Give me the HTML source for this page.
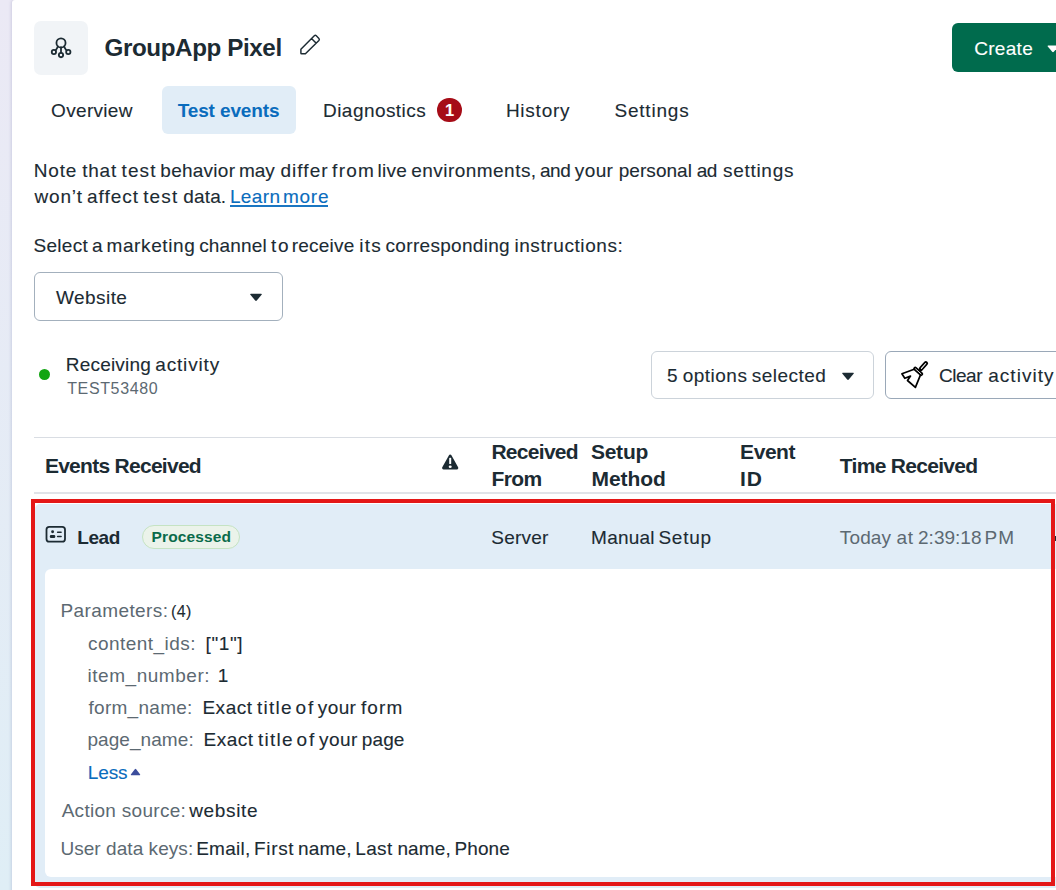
<!DOCTYPE html>
<html lang="en">
<head>
<meta charset="utf-8">
<title>GroupApp Pixel - Test events</title>
<style>
html,body{margin:0;padding:0;}
body{width:1056px;height:890px;overflow:hidden;position:relative;background:linear-gradient(180deg,#ebe9f5 0%,#dfeef6 100%);font-family:"Liberation Sans",Arial,Helvetica,sans-serif;}
.card{position:absolute;left:12px;top:0;width:1060px;height:900px;background:#fff;border-top-left-radius:3px;box-shadow:-1px 0 3px rgba(70,70,130,.17);}
.t{position:absolute;white-space:pre;line-height:1;-webkit-text-stroke:0.12px currentColor;}
.abs{position:absolute;}
svg{position:absolute;overflow:visible;}
</style>
</head>
<body>
<div class="card"></div>

<div class="abs" style="left:34px;top:20.7px;width:54px;height:54px;border-radius:7px;background:#f1f4f7"></div>
<svg style="left:0;top:0" width="1056" height="890" viewBox="0 0 1056 890" fill="none" stroke="#1c2b33" stroke-linecap="round" stroke-linejoin="round">
<g stroke-width="1.8">
<circle cx="61" cy="42.9" r="4.55"/>
<circle cx="53.9" cy="52" r="2.15"/>
<circle cx="61" cy="55.1" r="2.15"/>
<circle cx="68.3" cy="52" r="2.15"/>
<path d="M61 47.4V52.8M57.9 46.3C57.3 48 56.6 49.3 55.6 50.3M64.1 46.3C64.7 48 65.4 49.3 66.5 50.3"/>
</g>
<path stroke-width="1.45" transform="translate(-0.1,-0.5)" d="M301 53.7V49.8L314.4 36.3Q315.4 35.4 316.4 36.3L319 38.9Q319.9 39.9 319 40.9L305.5 54.3L301.6 54.3Q301 54.3 301 53.7ZM311.6 39.1L316.1 43.6"/>
</svg>
<span class="t" style="left:104.55px;top:36.2px;font-size:24.2px;font-weight:700;letter-spacing:-0.4px;color:#1c2b33;-webkit-text-stroke:0;">GroupApp Pixel</span>
<div class="abs" style="left:952px;top:23px;width:120px;height:49px;border-radius:6px;background:#006b4d"></div>
<span class="t" style="left:974.18px;top:38.75px;font-size:19px;font-weight:400;letter-spacing:0.317px;color:#ffffff;">Create</span>
<svg style="left:1046px;top:44px" width="14" height="10" viewBox="0 0 14 10"><path d="M2.2 1.6H11.8Q13 1.6 12.2 2.6L7.8 7.8Q7 8.7 6.2 7.8L1.8 2.6Q1 1.6 2.2 1.6Z" fill="#fff"/></svg>
<div class="abs" style="left:162px;top:86px;width:133.5px;height:48px;border-radius:6px;background:#e1edf7"></div>
<span class="t" style="left:51.1px;top:101.2px;font-size:19px;font-weight:400;letter-spacing:0.313px;color:#1c2b33;">Overview</span>
<span class="t" style="left:177.66px;top:101px;font-size:19px;font-weight:700;letter-spacing:-0.124px;color:#0a6cbd;-webkit-text-stroke:0;">Test events</span>
<span class="t" style="left:323.05px;top:101.2px;font-size:19px;font-weight:400;letter-spacing:0.44px;color:#1c2b33;">Diagnostics</span>
<span class="t" style="left:505.9px;top:101.2px;font-size:19px;font-weight:400;letter-spacing:0.759px;color:#1c2b33;">History</span>
<span class="t" style="left:614.46px;top:101.2px;font-size:19px;font-weight:400;letter-spacing:0.791px;color:#1c2b33;">Settings</span>
<div class="abs" style="left:437.4px;top:97.5px;width:24.5px;height:24.5px;border-radius:50%;background:#a60c17"></div>
<span class="t" style="left:445px;top:101.6px;font-size:16.5px;font-weight:700;color:#fff">1</span>
<div class="ln"><span class="t" style="left:33.75px;top:160.8px;font-size:19px;font-weight:400;letter-spacing:0.81px;color:#1c2b33;">Note</span> <span class="t" style="left:82.15px;top:160.8px;font-size:19px;font-weight:400;letter-spacing:0.784px;color:#1c2b33;">that</span> <span class="t" style="left:121.53px;top:160.8px;font-size:19px;font-weight:400;letter-spacing:1.115px;color:#1c2b33;">test</span> <span class="t" style="left:160.33px;top:160.8px;font-size:19px;font-weight:400;letter-spacing:0.252px;color:#1c2b33;">behavior</span> <span class="t" style="left:238.99px;top:160.8px;font-size:19px;font-weight:400;letter-spacing:-0.002px;color:#1c2b33;">may</span> <span class="t" style="left:280.47px;top:160.8px;font-size:19px;font-weight:400;letter-spacing:1.054px;color:#1c2b33;">differ</span> <span class="t" style="left:332.09px;top:160.8px;font-size:19px;font-weight:400;letter-spacing:1.28px;color:#1c2b33;">from</span> <span class="t" style="left:377.44px;top:160.8px;font-size:19px;font-weight:400;letter-spacing:0.29px;color:#1c2b33;">live</span> <span class="t" style="left:411.3px;top:160.8px;font-size:19px;font-weight:400;letter-spacing:0.457px;color:#1c2b33;">environments,</span> <span class="t" style="left:539.91px;top:160.8px;font-size:19px;font-weight:400;letter-spacing:-0.45px;color:#1c2b33;">and</span> <span class="t" style="left:574.8px;top:160.8px;font-size:19px;font-weight:400;letter-spacing:0.393px;color:#1c2b33;">your</span> <span class="t" style="left:618.77px;top:160.8px;font-size:19px;font-weight:400;letter-spacing:0.039px;color:#1c2b33;">personal</span> <span class="t" style="left:696.72px;top:160.8px;font-size:19px;font-weight:400;letter-spacing:-0.45px;color:#1c2b33;">ad</span> <span class="t" style="left:722.94px;top:160.8px;font-size:19px;font-weight:400;letter-spacing:0.717px;color:#1c2b33;">settings</span></div>
<div class="ln"><span class="t" style="left:34.51px;top:187.2px;font-size:19px;font-weight:400;letter-spacing:0.796px;color:#1c2b33;">won’t</span> <span class="t" style="left:86.97px;top:187.2px;font-size:19px;font-weight:400;letter-spacing:0.999px;color:#1c2b33;">affect</span> <span class="t" style="left:143.15px;top:187.2px;font-size:19px;font-weight:400;letter-spacing:1.144px;color:#1c2b33;">test</span> <span class="t" style="left:183.31px;top:187.2px;font-size:19px;font-weight:400;letter-spacing:0.148px;color:#1c2b33;">data.</span></div>
<div class="ln"><span class="t" style="left:229.9px;top:187.2px;font-size:19px;font-weight:400;letter-spacing:0.385px;color:#0a6cbd;">Learn</span> <span class="t" style="left:282.95px;top:187.2px;font-size:19px;font-weight:400;letter-spacing:0.758px;color:#0a6cbd;">more</span></div>
<div class="abs" style="left:230px;top:205.45px;width:98.4px;height:1.1px;background:#1a76c2"></div>
<div class="ln"><span class="t" style="left:33.53px;top:236px;font-size:19px;font-weight:400;letter-spacing:0.285px;color:#1c2b33;">Select</span> <span class="t" style="left:92.11px;top:236px;font-size:19px;font-weight:400;letter-spacing:0.0px;color:#1c2b33;">a</span> <span class="t" style="left:106.46px;top:236px;font-size:19px;font-weight:400;letter-spacing:0.622px;color:#1c2b33;">marketing</span> <span class="t" style="left:199.14px;top:236px;font-size:19px;font-weight:400;letter-spacing:0.178px;color:#1c2b33;">channel</span> <span class="t" style="left:270.92px;top:236px;font-size:19px;font-weight:400;letter-spacing:1.9px;color:#1c2b33;">to</span> <span class="t" style="left:291.75px;top:236px;font-size:19px;font-weight:400;letter-spacing:0.206px;color:#1c2b33;">receive</span> <span class="t" style="left:359.33px;top:236px;font-size:19px;font-weight:400;letter-spacing:1.149px;color:#1c2b33;">its</span> <span class="t" style="left:385.57px;top:236px;font-size:19px;font-weight:400;letter-spacing:0.308px;color:#1c2b33;">corresponding</span> <span class="t" style="left:514.41px;top:236px;font-size:19px;font-weight:400;letter-spacing:0.588px;color:#1c2b33;">instructions:</span></div>
<div class="abs" style="left:34px;top:272px;width:247px;height:47px;border:1px solid #a3b0bd;border-radius:6px;background:#fff"></div>
<span class="t" style="left:55.94px;top:287.75px;font-size:19px;font-weight:400;letter-spacing:0.452px;color:#1c2b33;">Website</span>
<svg style="left:249px;top:293px" width="14" height="9" viewBox="0 0 14 9"><path d="M1.8 0.8H12.2Q13.4 0.8 12.6 1.8L7.8 7.6Q7 8.5 6.2 7.6L1.4 1.8Q0.6 0.8 1.8 0.8Z" fill="#1c2b33"/></svg>
<div class="abs" style="left:39.2px;top:369.2px;width:11px;height:11px;border-radius:50%;background:#12a512"></div>
<div class="ln"><span class="t" style="left:65.83px;top:355.25px;font-size:19px;font-weight:400;letter-spacing:0.188px;color:#1c2b33;">Receiving</span> <span class="t" style="left:155.29px;top:355.25px;font-size:19px;font-weight:400;letter-spacing:0.827px;color:#1c2b33;">activity</span></div>
<span class="t" style="left:67.16px;top:380.75px;font-size:16px;font-weight:400;letter-spacing:0.642px;color:#5c6972;-webkit-text-stroke:0;">TEST53480</span>
<div class="abs" style="left:650.8px;top:350.75px;width:220.8px;height:45.75px;border:1px solid #ccd3da;border-radius:6px;background:#fff"></div>
<div class="ln"><span class="t" style="left:667.01px;top:365.75px;font-size:19px;font-weight:400;letter-spacing:0.0px;color:#1c2b33;">5</span> <span class="t" style="left:682.67px;top:365.75px;font-size:19px;font-weight:400;letter-spacing:0.492px;color:#1c2b33;">options</span> <span class="t" style="left:751.68px;top:365.75px;font-size:19px;font-weight:400;letter-spacing:0.475px;color:#1c2b33;">selected</span></div>
<svg style="left:840.5px;top:371.5px" width="14" height="9" viewBox="0 0 14 9"><path d="M1.8 0.8H12.2Q13.4 0.8 12.6 1.8L7.8 7.6Q7 8.5 6.2 7.6L1.4 1.8Q0.6 0.8 1.8 0.8Z" fill="#1c2b33"/></svg>
<div class="abs" style="left:885px;top:350.5px;width:200px;height:46px;border:1px solid #9aa8b8;border-radius:6px;background:#fff"></div>
<svg style="left:0;top:0" width="1056" height="890" viewBox="0 0 1056 890" fill="none" stroke="#000" stroke-linecap="round" stroke-linejoin="round">
<path stroke-width="1.7" d="M914.2 369.3L901.9 373.8L904.8 378.3L910.5 376.1L907.5 380.5L915.4 387.4L920.5 374.9"/>
<path stroke-width="4.1" d="M915.3 368.7L921.2 374"/>
<path stroke-width="0.9" stroke="#fff" d="M915.5 368.9L921 373.8"/>
<path stroke-width="4.4" d="M921 368.8L925.9 363.3"/>
<path stroke-width="1.1" stroke="#fff" d="M921.4 368.4L925.7 363.5"/>
</svg>
<div class="ln"><span class="t" style="left:938.92px;top:366px;font-size:19px;font-weight:400;letter-spacing:-0.45px;color:#1c2b33;">Clear</span> <span class="t" style="left:988.2px;top:366px;font-size:19px;font-weight:400;letter-spacing:1.038px;color:#1c2b33;">activity</span></div>
<div class="abs" style="left:34px;top:437px;width:1030px;height:1px;background:#d9dde3"></div>
<div class="abs" style="left:34px;top:492px;width:1030px;height:2px;background:#e0e3e8"></div>
<span class="t" style="left:44.88px;top:454.6px;font-size:21px;font-weight:700;letter-spacing:-0.722px;color:#1c2b33;-webkit-text-stroke:0;">Events Received</span>
<span class="t" style="left:491.41px;top:440.5px;font-size:21px;font-weight:700;letter-spacing:-0.709px;color:#1c2b33;-webkit-text-stroke:0;">Received</span>
<span class="t" style="left:491.38px;top:467.7px;font-size:21px;font-weight:700;letter-spacing:-0.554px;color:#1c2b33;-webkit-text-stroke:0;">From</span>
<span class="t" style="left:590.89px;top:440.5px;font-size:21px;font-weight:700;letter-spacing:-0.219px;color:#1c2b33;-webkit-text-stroke:0;">Setup</span>
<span class="t" style="left:591.56px;top:467.7px;font-size:21px;font-weight:700;letter-spacing:-0.056px;color:#1c2b33;-webkit-text-stroke:0;">Method</span>
<span class="t" style="left:740.12px;top:440.5px;font-size:21px;font-weight:700;letter-spacing:-0.46px;color:#1c2b33;-webkit-text-stroke:0;">Event</span>
<span class="t" style="left:740.09px;top:467.7px;font-size:21px;font-weight:700;letter-spacing:0.882px;color:#1c2b33;-webkit-text-stroke:0;">ID</span>
<span class="t" style="left:839.86px;top:454.6px;font-size:21px;font-weight:700;letter-spacing:-0.71px;color:#1c2b33;-webkit-text-stroke:0;">Time Received</span>
<svg style="left:0;top:0" width="1056" height="890" viewBox="0 0 1056 890">
<path d="M450.2 456L456.9 468H443.5Z" fill="#1c2b33" stroke="#1c2b33" stroke-width="2.8" stroke-linejoin="round"/>
<rect x="449.2" y="457.8" width="2" height="6.3" rx="0.6" fill="#fff"/>
<ellipse cx="450.2" cy="466.8" rx="1.5" ry="1.3" fill="#fff"/>
</svg>
<div class="abs" style="left:35px;top:504px;width:1040px;height:384px;border-radius:5px 0 0 5px;background:#e1edf7"></div>
<div class="abs" style="left:45px;top:569px;width:1040px;height:308px;border-radius:6px 0 0 6px;background:#fff"></div>
<svg style="left:0;top:0" width="1056" height="890" viewBox="0 0 1056 890" fill="none" stroke="#1c2b33" stroke-linecap="round">
<rect x="46.5" y="526.8" width="18.5" height="14.9" rx="2.8" stroke-width="1.8"/>
<circle cx="52.6" cy="531.8" r="1.45" fill="#1c2b33" stroke="none"/>
<rect x="49.8" y="535.1" width="5.5" height="3" rx="1.3" fill="#1c2b33" stroke="none"/>
<path d="M57.6 532.2H61.1M57.6 536.4H61.1" stroke-width="1.5"/>
</svg>
<span class="t" style="left:77.37px;top:528.2px;font-size:19px;font-weight:700;letter-spacing:-0.473px;color:#1c2b33;-webkit-text-stroke:0;">Lead</span>
<div class="abs" style="left:142px;top:524.7px;width:96px;height:22px;border:1px solid #c5e3c3;border-radius:12px;background:#ebf3ea"></div>
<span class="t" style="left:151.54px;top:529.0px;font-size:15.5px;font-weight:700;letter-spacing:0.131px;color:#0a6b4b;-webkit-text-stroke:0;">Processed</span>
<span class="t" style="left:491.35px;top:528.25px;font-size:19px;font-weight:400;letter-spacing:0.196px;color:#1c2b33;">Server</span>
<div class="ln"><span class="t" style="left:591.12px;top:528.25px;font-size:19px;font-weight:400;letter-spacing:0.209px;color:#1c2b33;">Manual</span> <span class="t" style="left:658.42px;top:528.25px;font-size:19px;font-weight:400;letter-spacing:0.745px;color:#1c2b33;">Setup</span></div>
<div class="ln"><span class="t" style="left:839.87px;top:528.25px;font-size:19px;font-weight:400;letter-spacing:0.119px;color:#5c6972;-webkit-text-stroke:0;">Today</span> <span class="t" style="left:896.46px;top:528.25px;font-size:19px;font-weight:400;letter-spacing:0.784px;color:#5c6972;-webkit-text-stroke:0;">at</span> <span class="t" style="left:918.01px;top:528.25px;font-size:19px;font-weight:400;letter-spacing:0.02px;color:#5c6972;-webkit-text-stroke:0;">2:39:18</span> <span class="t" style="left:984.41px;top:528.25px;font-size:19px;font-weight:400;letter-spacing:1.078px;color:#5c6972;-webkit-text-stroke:0;">PM</span></div>
<div class="abs" style="left:1055px;top:536px;width:2px;height:5px;background:#1c2b33"></div>
<span class="t" style="left:60.42px;top:601px;font-size:19px;font-weight:400;letter-spacing:0.414px;color:#5c6972;-webkit-text-stroke:0;">Parameters:</span>
<span class="t" style="left:171.09px;top:604px;font-size:16px;font-weight:400;letter-spacing:0.378px;color:#1c2b33;">(4)</span>
<span class="t" style="left:87.95px;top:633.5px;font-size:19px;font-weight:400;letter-spacing:0.466px;color:#5c6972;-webkit-text-stroke:0;">content_ids:</span>
<span class="t" style="left:205.56px;top:633.5px;font-size:19px;font-weight:400;letter-spacing:0.596px;color:#1c2b33;">[&quot;1&quot;]</span>
<span class="t" style="left:87.41px;top:665.75px;font-size:19px;font-weight:400;letter-spacing:0.552px;color:#5c6972;-webkit-text-stroke:0;">item_number:</span>
<span class="t" style="left:217.65px;top:665.75px;font-size:19px;font-weight:400;letter-spacing:0.0px;color:#1c2b33;">1</span>
<span class="t" style="left:88.49px;top:698.25px;font-size:19px;font-weight:400;letter-spacing:0.279px;color:#5c6972;-webkit-text-stroke:0;">form_name:</span>
<div class="ln"><span class="t" style="left:202.4px;top:698.25px;font-size:19px;font-weight:400;letter-spacing:0.536px;color:#1c2b33;">Exact</span> <span class="t" style="left:257.03px;top:698.25px;font-size:19px;font-weight:400;letter-spacing:1.255px;color:#1c2b33;">title</span> <span class="t" style="left:295.54px;top:698.25px;font-size:19px;font-weight:400;letter-spacing:1.9px;color:#1c2b33;">of</span> <span class="t" style="left:317.8px;top:698.25px;font-size:19px;font-weight:400;letter-spacing:0.393px;color:#1c2b33;">your</span> <span class="t" style="left:360.88px;top:698.25px;font-size:19px;font-weight:400;letter-spacing:1.184px;color:#1c2b33;">form</span></div>
<span class="t" style="left:87.41px;top:730.25px;font-size:19px;font-weight:400;letter-spacing:0.069px;color:#5c6972;-webkit-text-stroke:0;">page_name:</span>
<div class="ln"><span class="t" style="left:203.62px;top:730.25px;font-size:19px;font-weight:400;letter-spacing:0.48px;color:#1c2b33;">Exact</span> <span class="t" style="left:258.03px;top:730.25px;font-size:19px;font-weight:400;letter-spacing:1.255px;color:#1c2b33;">title</span> <span class="t" style="left:296.49px;top:730.25px;font-size:19px;font-weight:400;letter-spacing:1.9px;color:#1c2b33;">of</span> <span class="t" style="left:319.1px;top:730.25px;font-size:19px;font-weight:400;letter-spacing:0.393px;color:#1c2b33;">your</span> <span class="t" style="left:361.77px;top:730.25px;font-size:19px;font-weight:400;letter-spacing:0.115px;color:#1c2b33;">page</span></div>
<span class="t" style="left:87.63px;top:762.75px;font-size:19px;font-weight:400;letter-spacing:-0.061px;color:#0a6cbd;">Less</span>
<span class="t" style="left:61.64px;top:800.75px;font-size:19px;font-weight:400;letter-spacing:0.296px;color:#5c6972;-webkit-text-stroke:0;">Action source:</span>
<span class="t" style="left:189.26px;top:800.75px;font-size:19px;font-weight:400;letter-spacing:0.632px;color:#1c2b33;">website</span>
<span class="t" style="left:60.41px;top:839px;font-size:19px;font-weight:400;letter-spacing:0.056px;color:#5c6972;-webkit-text-stroke:0;">User data keys:</span>
<div class="ln"><span class="t" style="left:196.13px;top:839px;font-size:19px;font-weight:400;letter-spacing:0.292px;color:#1c2b33;">Email,</span> <span class="t" style="left:254.04px;top:839px;font-size:19px;font-weight:400;letter-spacing:0.661px;color:#1c2b33;">First</span> <span class="t" style="left:297.97px;top:839px;font-size:19px;font-weight:400;letter-spacing:0.163px;color:#1c2b33;">name,</span> <span class="t" style="left:355.2px;top:839px;font-size:19px;font-weight:400;letter-spacing:0.388px;color:#1c2b33;">Last</span> <span class="t" style="left:397.42px;top:839px;font-size:19px;font-weight:400;letter-spacing:0.126px;color:#1c2b33;">name,</span> <span class="t" style="left:454.5px;top:839px;font-size:19px;font-weight:400;letter-spacing:0.075px;color:#1c2b33;">Phone</span></div>
<svg style="left:130.2px;top:768.2px" width="11" height="8" viewBox="0 0 11 8"><path d="M1.3 7.2H9.7Q10.7 7.2 10 6.3L6.2 1.3Q5.5 0.4 4.8 1.3L1 6.3Q0.3 7.2 1.3 7.2Z" fill="#3c4d9c"/></svg>
<div class="abs" style="left:31px;top:499px;width:1016px;height:378.5px;border:4px solid #e41717;"></div>
</body>
</html>
